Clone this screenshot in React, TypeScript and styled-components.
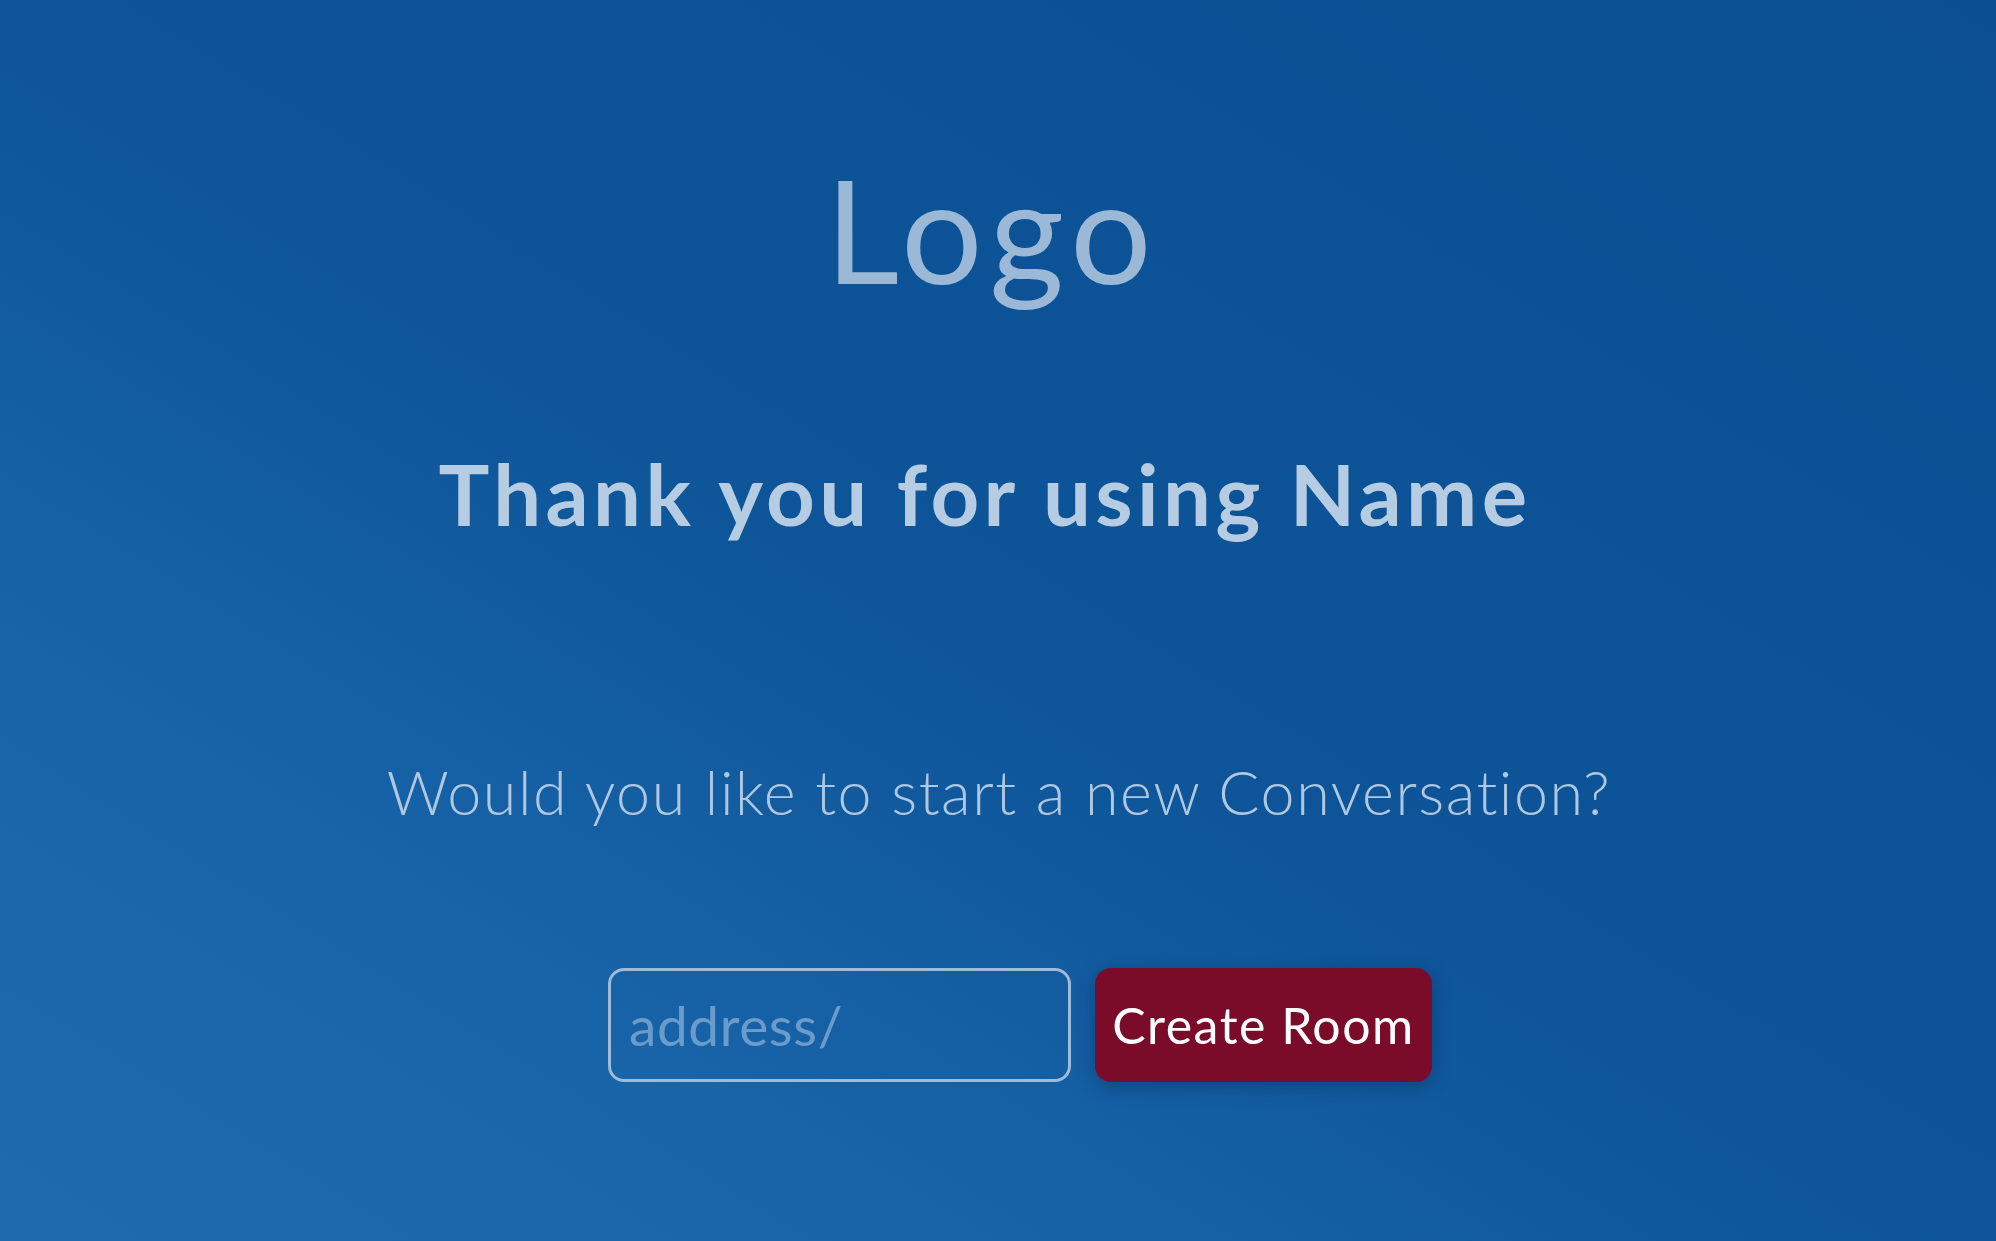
import React from "react";
import styled, { createGlobalStyle } from "styled-components";

const GlobalStyle = createGlobalStyle`
  html, body {
    margin: 0;
    padding: 0;
  }
  body {
    font-family: Lato, "Open Sans", sans-serif;
    font-variant-ligatures: none;
  }
`;

const Page = styled.main`
  box-sizing: border-box;
  min-height: 100vh;
  width: 100%;
  padding-top: 157px;
  display: flex;
  flex-direction: column;
  align-items: center;
  background: linear-gradient(
    to top right,
    #1d6aaf 0%,
    #1965aa 22%,
    #0d5498 50%,
    #0b4f92 100%
  );
`;

const Logo = styled.h1`
  margin: 0 0 0 -12px;
  font-family: Lato, sans-serif;
  font-weight: 400;
  font-size: 144px;
  line-height: 1;
  letter-spacing: 7px;
  color: #9bb9d6;
`;

const Title = styled.h2`
  margin: 150px 0 0 -26px;
  font-family: Lato, sans-serif;
  font-weight: 700;
  font-size: 85px;
  line-height: 1;
  letter-spacing: 4.4px;
  color: #b5cce3;
`;

const Question = styled.p`
  margin: 225px 0 0 2px;
  font-family: Lato, sans-serif;
  font-weight: 300;
  font-size: 61px;
  line-height: 1;
  letter-spacing: 1.55px;
  font-variant-ligatures: none;
  color: #afc7e0;
`;

const Form = styled.form`
  margin: 146px 0 0 44px;
  display: flex;
  align-items: stretch;
  gap: 24px;
`;

const AddressInput = styled.input`
  box-sizing: border-box;
  width: 463px;
  height: 114px;
  padding: 0 18px;
  border: 3px solid #9fbbd8;
  border-radius: 16px;
  background: transparent;
  font-family: Lato, sans-serif;
  font-size: 55px;
  letter-spacing: 0.6px;
  color: #d6e3f0;
  outline: none;
  &::placeholder {
    color: #6b9bcb;
  }
`;

const CreateButton = styled.button`
  box-sizing: border-box;
  width: 337px;
  height: 114px;
  padding: 0;
  border: none;
  border-radius: 16px;
  background: #7a0c2a;
  color: #ffffff;
  font-family: Lato, sans-serif;
  font-weight: 400;
  font-size: 50px;
  letter-spacing: 1.5px;
  cursor: pointer;
  box-shadow: 0 4px 18px rgba(4, 30, 70, 0.35);
`;

export default function App() {
  return (
    <>
      <GlobalStyle />
      <Page>
        <Logo>Logo</Logo>
        <Title>Thank you for using Name</Title>
        <Question>Would you like to start a new Conversation?</Question>
        <Form onSubmit={(e) => e.preventDefault()}>
          <AddressInput placeholder="address/" />
          <CreateButton type="submit">Create Room</CreateButton>
        </Form>
      </Page>
    </>
  );
}
